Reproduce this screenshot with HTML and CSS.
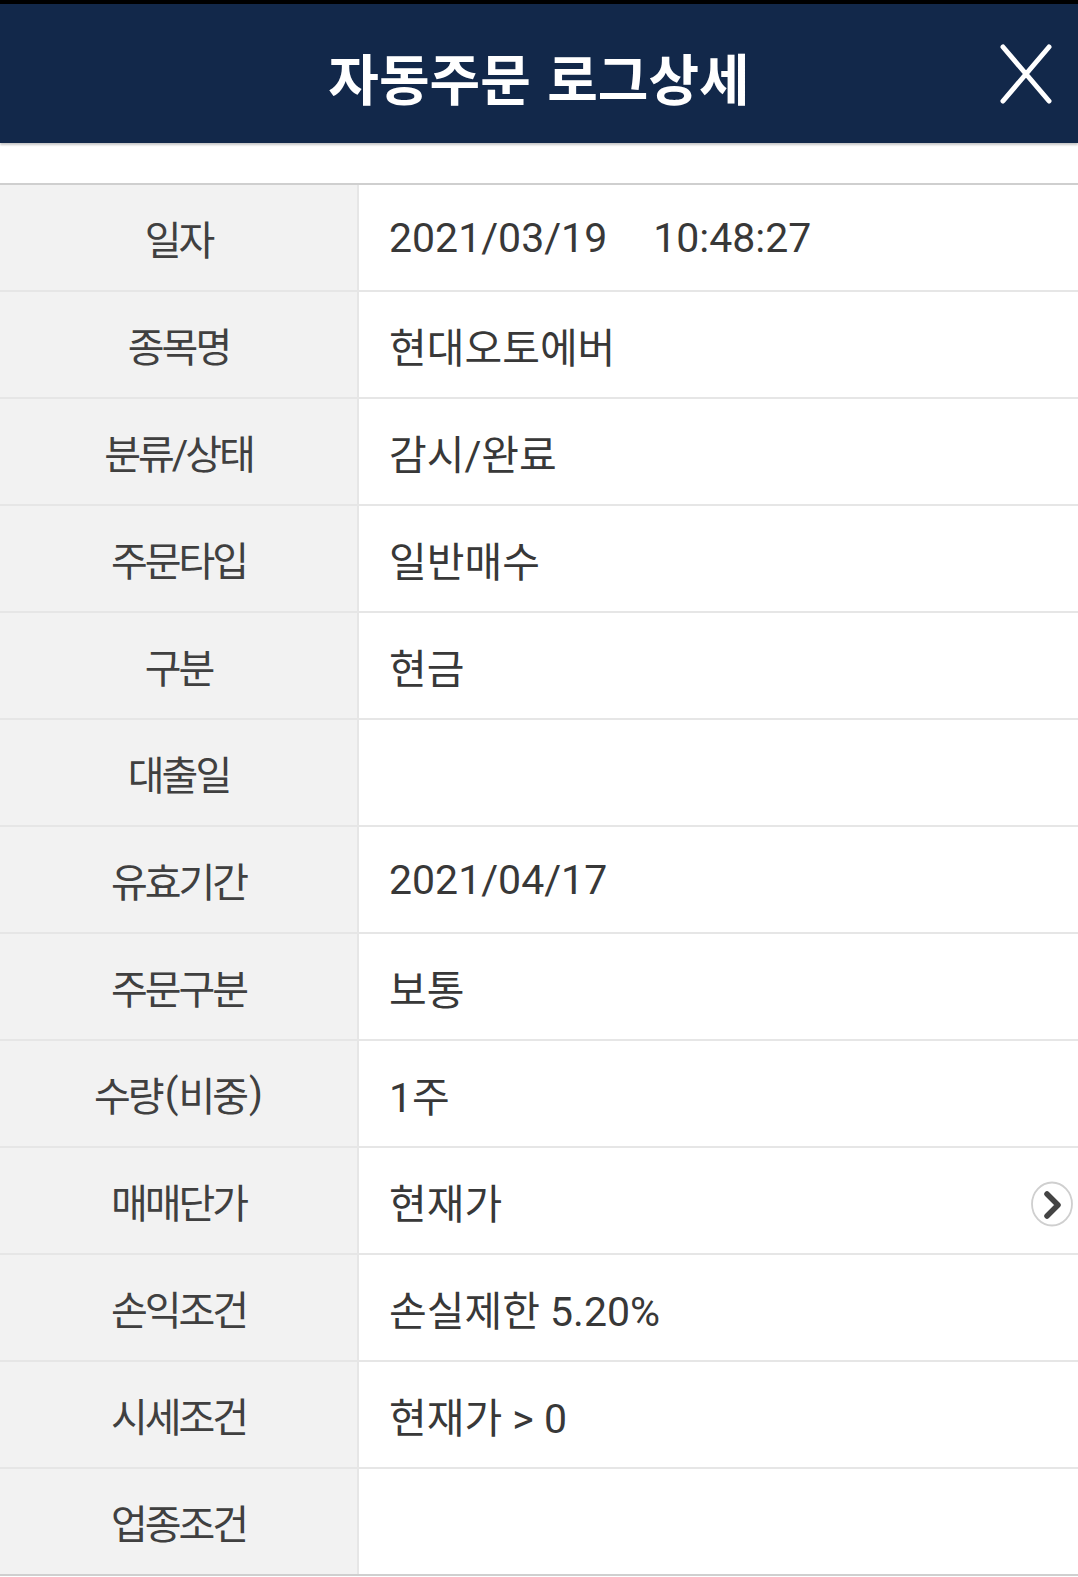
FILE: index.html
```html
<!DOCTYPE html>
<html>
<head>
    <title>자동주문 로그상세</title>
    <link rel="stylesheet" href="styles.css">
</head>
<body>
    <div class="status-strip"></div>
    <div class="header">
        <div></div>
        <h1 class="title">자동주문 로그상세</h1>
        <button class="close-btn" aria-label="닫기">
            <svg width="52" height="60" viewBox="0 0 52 60">
                <path d="M3 3 L49 57 M49 3 L3 57" stroke="#fff" stroke-width="5" stroke-linecap="round" fill="none"/>
            </svg>
        </button>
    </div>

    <div class="log-table">
        <div class="row"><div class="label">일자</div><div class="value">2021/03/19<span class="time">10:48:27</span></div></div>
        <div class="row"><div class="label">종목명</div><div class="value">현대오토에버</div></div>
        <div class="row"><div class="label">분류/상태</div><div class="value">감시/완료</div></div>
        <div class="row"><div class="label">주문타입</div><div class="value">일반매수</div></div>
        <div class="row"><div class="label">구분</div><div class="value">현금</div></div>
        <div class="row"><div class="label">대출일</div><div class="value"></div></div>
        <div class="row"><div class="label">유효기간</div><div class="value">2021/04/17</div></div>
        <div class="row"><div class="label">주문구분</div><div class="value">보통</div></div>
        <div class="row"><div class="label">수량<span class="paren">(</span>비중<span class="paren">)</span></div><div class="value">1주</div></div>
        <div class="row">
            <div class="label">매매단가</div>
            <div class="value value-link">
                <span>현재가</span>
                <span class="more-btn">
                    <svg width="44" height="48" viewBox="0 0 44 48">
                        <ellipse cx="22" cy="24" rx="20" ry="21.5" stroke="#cfcfcf" stroke-width="1.8" fill="#fff"/>
                        <path d="M17 14 L28 25 L17 36" stroke="#444" stroke-width="5.5" stroke-linecap="round" stroke-linejoin="round" fill="none"/>
                    </svg>
                </span>
            </div>
        </div>
        <div class="row"><div class="label">손익조건</div><div class="value">손실제한 5.20%</div></div>
        <div class="row"><div class="label">시세조건</div><div class="value">현재가 &gt; 0</div></div>
        <div class="row last"><div class="label">업종조건</div><div class="value"></div></div>
    </div>
</body>
</html>
```

FILE: styles.css
```css
body {
    margin: 0;
    background-color: #fff;
    font-family: Roboto, "Noto Sans CJK KR", sans-serif;
    color: #3a3a3a;
}
.status-strip {
    height: 4px;
    background-color: #000;
}
.header {
    display: grid;
    grid-template-columns: 1fr auto 1fr;
    align-items: center;
    height: 139px;
    background-color: #12284a;
    box-shadow: 0 2px 2px rgba(0, 0, 0, 0.22);
}
.title {
    margin: 0;
    padding-top: 4px;
    color: #fff;
    font-family: "Noto Sans CJK KR", sans-serif;
    font-size: 55px;
    font-weight: 700;
    word-spacing: 4px;
}
.close-btn {
    justify-self: end;
    margin-right: 26px;
    padding: 0;
    border: none;
    background: none;
    display: flex;
}
.log-table {
    margin-top: 40px;
    border-top: 2px solid #cfcfcf;
}
.row {
    display: grid;
    grid-template-columns: 359px 1fr;
    height: 105px;
    border-bottom: 2px solid #e6e6e6;
}
.row.last {
    border-bottom-color: #cfcfcf;
}
.label {
    display: flex;
    align-items: center;
    justify-content: center;
    background-color: #f2f2f2;
    border-right: 2px solid #e6e6e6;
    font-size: 40px;
    letter-spacing: -3px;
    color: #404040;
}
.label .paren {
    margin: 0 3px;
}
.value {
    display: flex;
    align-items: center;
    padding-left: 30px;
    font-size: 41px;
    color: #383838;
}
.time {
    margin-left: 46px;
}
.value-link {
    justify-content: space-between;
    padding-right: 4px;
}
.more-btn {
    display: flex;
    margin-top: 6px;
}
```
